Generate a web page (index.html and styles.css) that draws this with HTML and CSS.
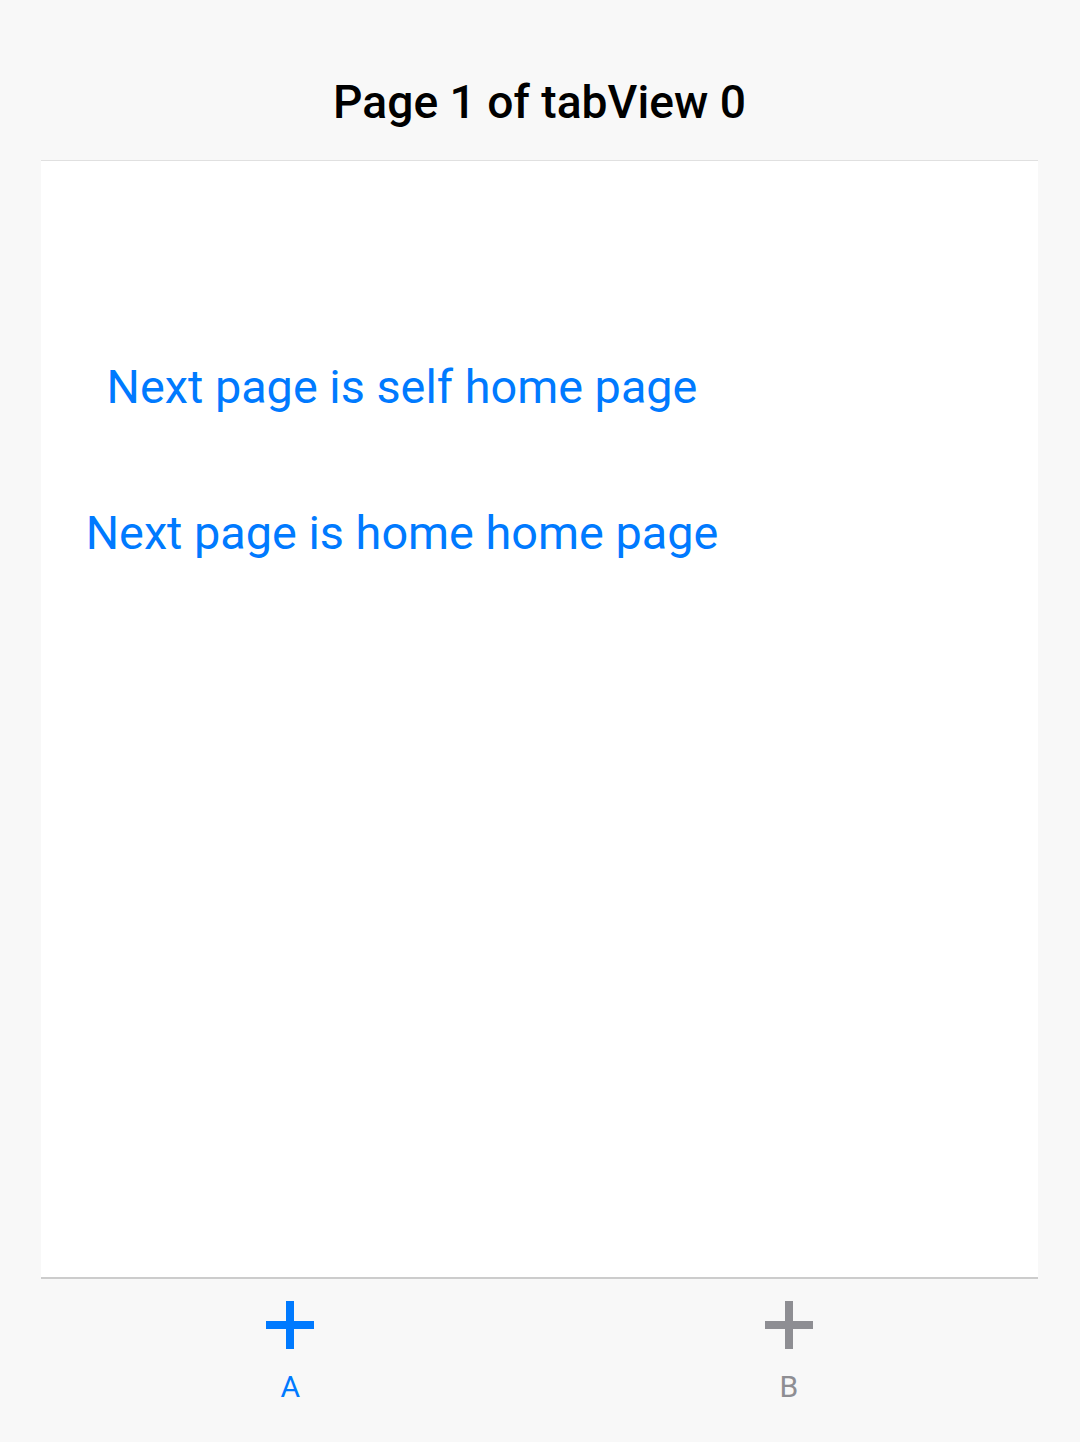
FILE: index.html
```html
<!DOCTYPE html>
<html>
<head>
<meta charset="utf-8">
<link rel="stylesheet" href="styles.css">
</head>
<body>
<div class="app">
  <header class="navbar">
    <h1 class="title">Page 1 of tabView 0</h1>
  </header>
  <main class="content">
    <div class="links">
      <a class="link">Next page is self home page</a>
      <a class="link">Next page is home home page</a>
    </div>
  </main>
  <nav class="tabbar">
    <div class="tab active">
      <svg class="icon" viewBox="0 0 48 48" width="48" height="48"><path d="M24 0V48M0 24H48" stroke="currentColor" stroke-width="8" fill="none"/></svg>
      <span class="label">A</span>
    </div>
    <div class="tab">
      <svg class="icon" viewBox="0 0 48 48" width="48" height="48"><path d="M24 0V48M0 24H48" stroke="currentColor" stroke-width="8" fill="none"/></svg>
      <span class="label">B</span>
    </div>
  </nav>
</div>
</body>
</html>
```
FILE: styles.css
```css
html, body {
  margin: 0;
  padding: 0;
  background: #f8f8f8;
  font-family: Roboto, "Liberation Sans", sans-serif;
}
.app {
  margin: 41px 0 0 41px;
  width: 997px;
  height: 1374px;
  display: flex;
  flex-direction: column;
  background: #ffffff;
}
.navbar {
  height: 119px;
  flex: none;
  background: #f8f8f8;
  border-bottom: 1px solid #e0e0e0;
  display: flex;
  align-items: center;
  justify-content: center;
}
.title {
  margin: 0;
  font-size: 46.2px;
  font-weight: 500;
  color: #000;
  line-height: 60px;
  padding-top: 2px;
}
.content {
  flex: 1;
  background: #fff;
  padding-top: 196px;
}
.links {
  width: 722px;
  display: flex;
  flex-direction: column;
  align-items: center;
  gap: 86px;
}
.link {
  display: block;
  font-size: 46.8px;
  line-height: 60px;
  color: #007aff;
  text-decoration: none;
}
.tabbar {
  flex: none;
  height: 136px;
  border-top: 2px solid #cccccc;
  background: #f8f8f8;
  display: flex;
}
.tab {
  flex: 1;
  display: flex;
  flex-direction: column;
  align-items: center;
  padding-top: 22px;
  color: #8e8e93;
}
.tab.active {
  color: #007aff;
}
.icon {
  display: block;
}
.label {
  margin-top: 20px;
  font-size: 30px;
  line-height: 36px;
}
```
